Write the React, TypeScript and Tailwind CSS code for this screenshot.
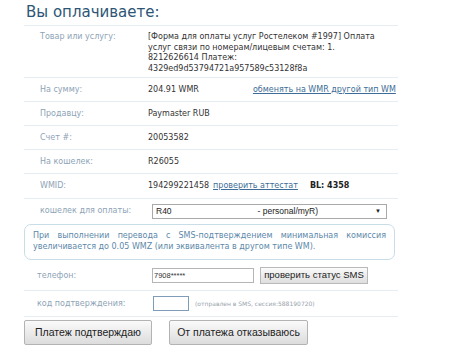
import React from "react";

const verdana = { fontFamily: '"DejaVu Sans", Verdana, sans-serif' };
const arial = { fontFamily: '"Liberation Sans", Arial, sans-serif' };

function Row(props: { label: string; children: React.ReactNode; h?: string }) {
  return (
    <div className={"flex items-center border-t border-[#e6edf2] " + (props.h || "h-[24px]")}>
      <div className="w-[124px] pl-[16px] text-[8px] text-[#8ea3b6]">{props.label}</div>
      <div className="flex-1 flex items-center whitespace-nowrap text-[8px] text-[#333]">{props.children}</div>
    </div>
  );
}

export default function App() {
  return (
    <div className="w-[450px] h-[352px] bg-white" style={verdana}>
      <div className="w-[374px] ml-[24px]">
        <h1 className="h-[25px] pl-[2px] pt-[1px] text-[15px] leading-[22px] text-[#2d5676]">
          Вы оплачиваете:
        </h1>

        <div className="flex border-t border-[#e6edf2] h-[52px] pt-[6px]">
          <div className="w-[124px] pl-[16px] text-[8px] leading-[10.7px] text-[#8ea3b6]">Товар или услугу:</div>
          <div className="flex-1 whitespace-nowrap text-[8px] leading-[10.7px] text-[#333]">
            [Форма для оплаты услуг Ростелеком #1997] Оплата
            <br />
            услуг связи по номерам/лицевым счетам: 1.
            <br />
            8212626614 Платеж:
            <br />
            4329ed9d53794721a957589c53128f8a
          </div>
        </div>

        <Row label="На сумму:">
          <span>204.91 WMR</span>
          <a href="#" className="ml-[54px] text-[#3d6d96] underline">обменять на WMR другой тип WM</a>
        </Row>
        <Row label="Продавцу:">Paymaster RUB</Row>
        <Row label="Счет #:">20053582</Row>
        <Row label="На кошелек:">R26055</Row>
        <Row label="WMID:" h="h-[25px]">
          <span>194299221458</span>
          <a href="#" className="ml-[4px] text-[#3d6d96] underline">проверить аттестат</a>
          <span className="ml-[12px] font-bold text-[#222]">BL: 4358</span>
        </Row>

        <div className="flex items-center border-t border-[#e6edf2] h-[25px]">
          <div className="w-[128px] pl-[16px] text-[8px] text-[#8ea3b6]">кошелек для оплаты:</div>
          <div
            className="flex items-center w-[235px] h-[15px] border border-[#a9a9a9] bg-white px-[3px] text-[8.5px] text-[#222]"
            style={arial}
          >
            <span>R40</span>
            <span className="ml-[86px]">- personal/myR)</span>
            <span className="ml-auto mr-[2px] text-[6px]">▼</span>
          </div>
        </div>

        <div className="mt-[1px] h-[36px] w-[371px] rounded-[7px] border border-[#c9dde9] px-[8px] pt-[5px] text-[8px] leading-[11px] text-[#5c88a9] text-justify [text-align-last:left]">
          При выполнении перевода с SMS-подтверждением минимальная комиссия увеличивается до 0.05 WMZ (или эквивалента в другом типе WM).
        </div>

        <div className="flex items-center h-[29px] mt-[1px]">
          <div className="w-[128px] pl-[13px] text-[8px] text-[#8ea3b6]">телефон:</div>
          <div
            className="w-[102px] h-[15px] border border-[#b5b5b5] px-[1px] text-[7.5px] leading-[13px] text-[#333]"
            style={arial}
          >
            7908*****
          </div>
          <button
            className="ml-[6px] h-[17px] w-[108px] border border-[#b9b9b9] bg-gradient-to-b from-[#fbfbfb] to-[#dedede] text-[9.5px] text-[#222] whitespace-nowrap"
            style={arial}
          >
            проверить статус SMS
          </button>
        </div>

        <div className="flex items-center h-[26px] border-t border-[#e6edf2]">
          <div className="w-[129px] pl-[13px] text-[8px] text-[#8ea3b6]">код подтверждения:</div>
          <div className="w-[36px] h-[15px] border border-[#7f9db9] bg-white" />
          <span className="ml-[6px] whitespace-nowrap text-[6px] text-[#9aa3ab]">(отправлен в SMS, сессия:588190720)</span>
        </div>

        <div className="flex gap-[17px] border-t border-[#e6edf2] pt-[3px]">
          <button
            className="h-[25px] w-[128px] rounded-[2px] border border-[#b3b3b3] bg-gradient-to-b from-[#fafafa] to-[#dcdcdc] text-[10.5px] text-[#222] whitespace-nowrap"
            style={arial}
          >
            Платеж подтверждаю
          </button>
          <button
            className="h-[25px] w-[139px] rounded-[2px] border border-[#b3b3b3] bg-gradient-to-b from-[#fafafa] to-[#dcdcdc] text-[10.5px] text-[#222] whitespace-nowrap"
            style={arial}
          >
            От платежа отказываюсь
          </button>
        </div>
      </div>
    </div>
  );
}
